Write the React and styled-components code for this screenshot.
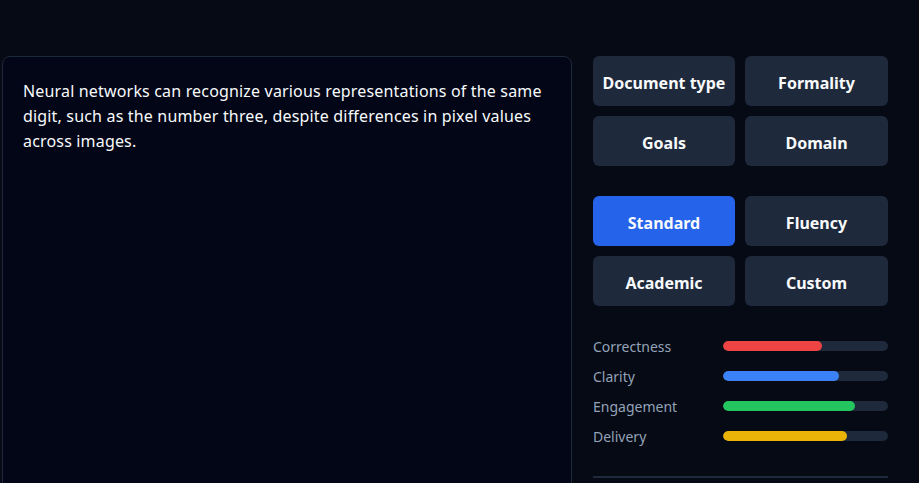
import React from "react";
import styled, { createGlobalStyle } from "styled-components";

const Global = createGlobalStyle`
  html, body { margin: 0; padding: 0; background: #050a14; }
  body { font-family: "Noto Sans", "Open Sans", sans-serif; color: #f1f5f9; overflow: hidden; }
`;

const Page = styled.div`
  display: flex;
  align-items: flex-start;
  gap: 21px;
  padding: 56px 31px 0 2px;
  height: 483px;
  box-sizing: border-box;
  overflow: hidden;
`;

const Panel = styled.div`
  flex: 0 0 570px;
  height: 440px;
  box-sizing: border-box;
  background: #020617;
  border: 1px solid #1e293b;
  border-radius: 8px;
  padding: 22px 20px;
  font-size: 16px;
  line-height: 25px;
  letter-spacing: 0.17px;
  color: #f8fafc;
`;

const Side = styled.div`
  width: 295px;
  display: flex;
  flex-direction: column;
`;

const Grid = styled.div`
  display: grid;
  grid-template-columns: 142px 143px;
  gap: 10px;
  margin-bottom: ${(p) => p.$mb || 0}px;
`;

const Btn = styled.button`
  height: 50px;
  border: none;
  border-radius: 6px;
  background: ${(p) => (p.$active ? "#2563eb" : "#1e293b")};
  color: #f8fafc;
  font-family: inherit;
  font-size: 16px;
  font-weight: 700;
  padding: 3px 0 0;
  cursor: pointer;
`;

const Metrics = styled.div`
  display: flex;
  flex-direction: column;
  gap: 10px;
  padding-bottom: 30px;
  border-bottom: 2px solid #1e293b;
`;

const Row = styled.div`
  display: grid;
  grid-template-columns: 130px 165px;
  align-items: center;
  height: 20px;
`;

const Label = styled.span`
  font-size: 14px;
  color: #94a3b8;
`;

const Track = styled.div`
  height: 10px;
  border-radius: 5px;
  background: #1e293b;
  overflow: hidden;
`;

const Fill = styled.div`
  height: 100%;
  border-radius: 5px;
  background: ${(p) => p.$color};
`;

const metrics = [
  ["Correctness", 60, "#ef4444"],
  ["Clarity", 70, "#3b82f6"],
  ["Engagement", 80, "#22c55e"],
  ["Delivery", 75, "#eab308"],
];

export default function App() {
  return (
    <>
      <Global />
      <Page>
        <Panel>
          Neural networks can recognize various representations of the same
          digit, such as the number three, despite differences in pixel values
          across images.
        </Panel>
        <Side>
          <Grid $mb={30}>
            <Btn>Document type</Btn>
            <Btn>Formality</Btn>
            <Btn>Goals</Btn>
            <Btn>Domain</Btn>
          </Grid>
          <Grid $mb={30}>
            <Btn $active>Standard</Btn>
            <Btn>Fluency</Btn>
            <Btn>Academic</Btn>
            <Btn>Custom</Btn>
          </Grid>
          <Metrics>
            {metrics.map(([name, v, c]) => (
              <Row key={name}>
                <Label>{name}</Label>
                <Track>
                  <Fill $color={c} style={{ width: `${v}%` }} />
                </Track>
              </Row>
            ))}
          </Metrics>
        </Side>
      </Page>
    </>
  );
}
